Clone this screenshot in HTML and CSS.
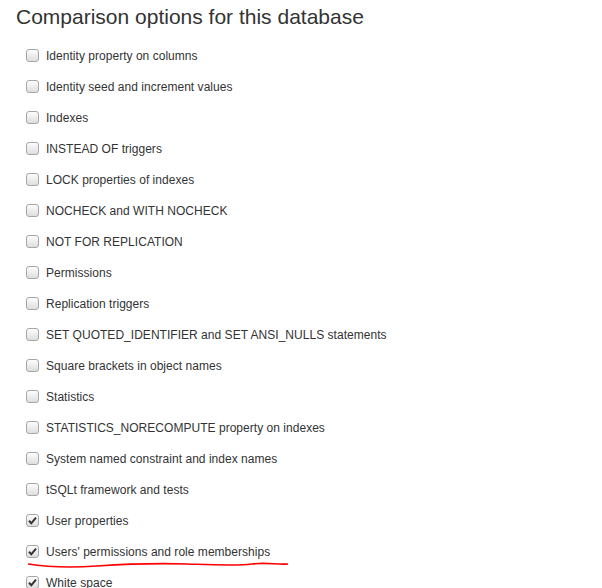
FILE: index.html
```html
<!DOCTYPE html>
<html>
<head>
<meta charset="utf-8">
<link rel="stylesheet" href="styles.css">
</head>
<body>
<div class="page">
  <h2 class="title">Comparison options for this database</h2>
  <ul class="options">
    <li class="opt"><span class="box"></span><span class="label">Identity property on columns</span></li>
    <li class="opt"><span class="box"></span><span class="label">Identity seed and increment values</span></li>
    <li class="opt"><span class="box"></span><span class="label">Indexes</span></li>
    <li class="opt"><span class="box"></span><span class="label">INSTEAD OF triggers</span></li>
    <li class="opt"><span class="box"></span><span class="label">LOCK properties of indexes</span></li>
    <li class="opt"><span class="box"></span><span class="label">NOCHECK and WITH NOCHECK</span></li>
    <li class="opt"><span class="box"></span><span class="label">NOT FOR REPLICATION</span></li>
    <li class="opt"><span class="box"></span><span class="label">Permissions</span></li>
    <li class="opt"><span class="box"></span><span class="label">Replication triggers</span></li>
    <li class="opt"><span class="box"></span><span class="label">SET QUOTED_IDENTIFIER and SET ANSI_NULLS statements</span></li>
    <li class="opt"><span class="box"></span><span class="label">Square brackets in object names</span></li>
    <li class="opt"><span class="box"></span><span class="label">Statistics</span></li>
    <li class="opt"><span class="box"></span><span class="label">STATISTICS_NORECOMPUTE property on indexes</span></li>
    <li class="opt"><span class="box"></span><span class="label">System named constraint and index names</span></li>
    <li class="opt"><span class="box"></span><span class="label">tSQLt framework and tests</span></li>
    <li class="opt"><span class="box checked"><svg viewBox="0 0 13 13" class="tick"><path d="M3 6.8 L5.3 9.3 L10 3.6" /></svg></span><span class="label">User properties</span></li>
    <li class="opt marked"><span class="box checked"><svg viewBox="0 0 13 13" class="tick"><path d="M3 6.8 L5.3 9.3 L10 3.6" /></svg></span><span class="label">Users' permissions and role memberships</span>
      <svg class="scribble" viewBox="0 0 262 10" width="262" height="10"><path d="M1 3 C 20 6, 40 7, 70 5 C 100 3, 130 2, 160 3 C 190 4, 210 5, 225 3 C 240 1, 250 4, 261 3" /></svg>
    </li>
    <li class="opt"><span class="box checked"><svg viewBox="0 0 13 13" class="tick"><path d="M3 6.8 L5.3 9.3 L10 3.6" /></svg></span><span class="label">White space</span></li>
  </ul>
</div>
</body>
</html>
```

FILE: styles.css
```css
html, body {
  margin: 0;
  padding: 0;
  background: #fff;
}
.page {
  padding: 0 0 0 16px;
  font-family: "Liberation Sans", Arial, sans-serif;
  color: #333;
}
.title {
  margin: 0;
  padding-top: 5px;
  font-weight: normal;
  font-size: 21px;
  line-height: 24px;
  color: #333;
}
.options {
  list-style: none;
  margin: 0;
  padding: 0 0 0 10px;
  margin-top: 11px;
}
.opt {
  position: relative;
  display: flex;
  align-items: center;
  height: 31px;
  font-size: 12px;
}
.box {
  width: 11px;
  height: 11px;
  border: 1px solid #a6a6a6;
  border-radius: 3px;
  background: linear-gradient(#fdfdfd, #dedede);
  margin-right: 7px;
  position: relative;
  flex: none;
}
.tick {
  position: absolute;
  left: -1px;
  top: -1px;
  width: 13px;
  height: 13px;
}
.tick path {
  fill: none;
  stroke: #333;
  stroke-width: 2;
}
.label {
  color: #333;
  letter-spacing: 0.03px;
}
.scribble {
  position: absolute;
  left: 1px;
  top: 25px;
}
.scribble path {
  fill: none;
  stroke: #f00;
  stroke-width: 1.6;
}
```
